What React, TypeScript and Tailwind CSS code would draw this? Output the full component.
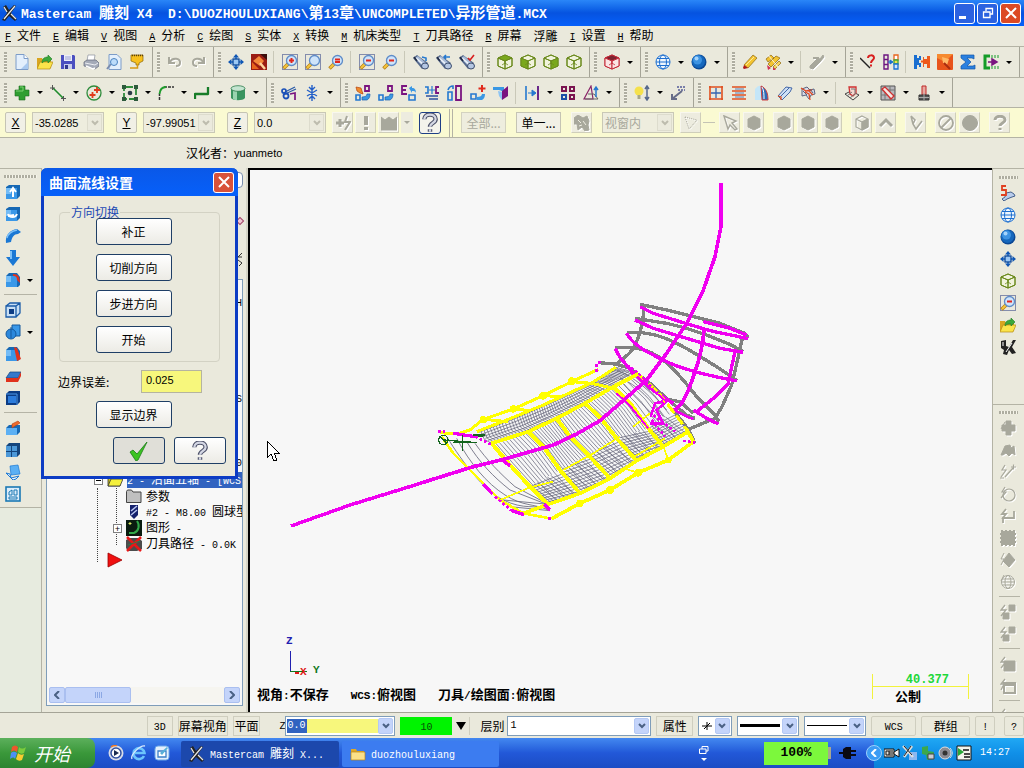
import type { ReactNode } from "react"

const G = "#a8a89c"

function Svg({ children, dim = false }: { children: ReactNode; dim?: boolean }) {
  return (
    <svg
      viewBox="0 0 16 16"
      className={dim ? "w-4 h-4 shrink-0 drop-shadow-[1px_1px_0_#ffffff]" : "w-4 h-4 shrink-0"}
      fill="none"
      stroke={dim ? G : "none"}
      aria-hidden="true"
    >
      {children}
    </svg>
  )
}

const latin = {
  sm: "font-['Liberation_Mono',monospace] text-[10px] whitespace-pre",
  md: "font-['Liberation_Mono',monospace] text-[11px] whitespace-pre",
  lg: "font-['Liberation_Mono',monospace] text-[13px] whitespace-pre",
}

/* Latin letters are half as wide as the Chinese ones, so they get their own size */
function Mix({ text, size = "sm" }: { text: string; size?: "sm" | "md" | "lg" }) {
  return (
    <>
      {text.split(/([\u0020-\u007f]+)/).map((part, i) =>
        i % 2 === 1 ? (
          <span key={i} className={latin[size]}>
            {part}
          </span>
        ) : (
          part
        )
      )}
    </>
  )
}

function Cube({ top = "none", left = "none", right = "none", line = "#6b8a1c" }) {
  return (
    <Svg>
      <g stroke={line} strokeLinejoin="round">
        <path d="M8 1 15 4v8l-7 3-7-3V4z" fill="#f1f3dc" />
        <path d="M8 1 15 4 8 7 1 4z" fill={top} />
        <path d="M1 4l7 3v8l-7-3z" fill={left} />
        <path d="M15 4 8 7v8l7-3z" fill={right} />
        <path d="M8 7V10M5 11l3-2 3 2" strokeWidth=".8" />
      </g>
    </Svg>
  )
}

function Zoom({ box = false, mark = "" }: { box?: boolean; mark?: string }) {
  return (
    <Svg>
      {box && <rect x=".5" y=".5" width="15" height="15" stroke="#1c2f7c" strokeDasharray="1 1" />}
      <path d="M6 10 1.500 14.500" stroke="#b8801a" strokeWidth="3.500" />
      <path d="M6 10 2 14" stroke="#f5c63c" strokeWidth="2" />
      <circle cx="9.500" cy="6.500" r="5" fill="#cfe4fa" stroke="#5f8cc8" strokeWidth="1.300" />
      {mark && <path d={mark} stroke="#e0261c" strokeWidth="2" />}
    </Svg>
  )
}

function Spyglass({ mark, color }: { mark: string; color: string }) {
  return (
    <Svg>
      <path d="M0 4 4 1l11 8-6 6z" fill="#54688c" />
      <path d="M2 4l3-2 8 7-3 4z" fill="#a9bcd8" />
      <path d="M3 4l8 7" stroke="#eef3fa" strokeWidth="1.600" />
      <ellipse cx="12" cy="12" rx="3.500" ry="3" fill="#b4c6e2" stroke="#3b4c6c" />
      <path d="M1 3l3 4" stroke="#222c44" strokeWidth="1.500" />
      <path d={mark} stroke={color} strokeWidth="1.600" />
    </Svg>
  )
}

const Globe = (
  <Svg>
    <g stroke="#1d6fd0">
      <circle cx="8" cy="8" r="7" fill="#eef6fd" />
      <ellipse cx="8" cy="8" rx="3.500" ry="7" />
      <path d="M1 8h14M2 4.500h12M2 11.500h12" />
    </g>
  </Svg>
)

const Sphere = (
  <Svg>
    <circle cx="8" cy="8" r="7.500" fill="#0c4894" />
    <circle cx="7.500" cy="7.300" r="6.600" fill="#1668bd" />
    <circle cx="6.500" cy="6" r="4.500" fill="#3d93e2" />
    <circle cx="5.500" cy="4.500" r="2" fill="#a5d4fb" />
  </Svg>
)

const Pan = (
  <Svg>
    <path d="M8 0l3 3.500H5zM8 16l3-3.500H5zM0 8l3.500-3v6zM16 8l-3.500-3v6z" fill="#0f56b4" />
    <path d="M8 3v10M3 8h10" stroke="#1464c4" strokeWidth="1.500" />
    <rect x="5" y="5" width="6" height="6" fill="#9cc8f4" stroke="#0c479a" strokeWidth="1.300" />
  </Svg>
)

const OpenFolder = (
  <Svg>
    <path d="M0 14V4h5l1 2h8v8z" fill="#d9a520" />
    <path d="M0 15 3 8h13l-3 7z" fill="#fbe44b" stroke="#b58a14" strokeWidth=".7" />
    <path d="M5 9c0-4 2-6 6-6V1l4 4-4 4V7C8 7 7 7 5 9z" fill="#3ca83a" stroke="#1d7c26" strokeWidth=".6" />
  </Svg>
)

const NewFile = (
  <Svg>
    <path d="M2 .5h8l4 4v11H2z" fill="#e3effc" stroke="#7c9cc8" />
    <path d="M10 .5v4h4" fill="#fff" stroke="#7c9cc8" />
    <path d="M7 15h7V8z" fill="#a9c9ef" />
  </Svg>
)
const Save = (
  <Svg>
    <path d="M1 1h13l1 1v13H1z" fill="#4b4fc0" />
    <path d="M4 1h8v6H4z" fill="#eceef9" />
    <path d="M4 10h8v5H4z" fill="#c9cdec" />
    <path d="M5 11h3v4H5z" fill="#33388f" />
    <path d="M5 3h6M5 5h6" stroke="#9aa0d4" />
  </Svg>
)
const Printer = (
  <Svg>
    <path d="M5 1h7l-1 6H4z" fill="#fff" stroke="#8a8f9c" strokeWidth=".7" />
    <path d="M1 8l3-2h9l3 3v3l-4 3-11-3z" fill="#a4aab8" stroke="#62687a" strokeWidth=".7" />
    <path d="M2 9l10 2 3-2" stroke="#eceef2" />
    <path d="M3 12l7 3 2-1" stroke="#fff" strokeWidth="1.500" />
  </Svg>
)
const Preview = (
  <Svg>
    <path d="M3 .5h8l4 4v11H3z" fill="#e3effc" stroke="#7c9cc8" />
    <path d="M5 10l-4 5" stroke="#7a8cae" strokeWidth="2" />
    <circle cx="8" cy="8" r="3.500" fill="#bcdcfa" stroke="#4c83c0" />
  </Svg>
)
const Funnel = (
  <Svg>
    <path d="M2 1h12v6l-4 2v2H7V9L2 7z" fill="#f7c01d" stroke="#8d6606" strokeWidth=".7" />
    <path d="M3 1.500h11" stroke="#5b4008" strokeWidth="1.500" strokeDasharray="1 1" />
    <path d="M8.500 11v3H1" stroke="#d79a12" strokeWidth="1.500" />
  </Svg>
)
const Undo = (
  <Svg dim>
    <path d="M2 3v6h6M3 8c2-5 11-4 10 1 0 2-2 3-4 3" strokeWidth="2" />
  </Svg>
)
const Redo = (
  <Svg dim>
    <path d="M14 3v6H8M13 8C11 3 2 4 3 9c0 2 2 3 4 3" strokeWidth="2" />
  </Svg>
)
const Repaint = (
  <Svg>
    <rect width="16" height="16" fill="#9b1c12" />
    <path d="M1 15V8l7 7z" fill="#e8641c" />
    <path d="M2 7l6-5 5 5-4 5z" fill="#f4883a" />
    <path d="M9 9l5 6" stroke="#ffd39a" strokeWidth="2.500" />
    <path d="M9 0h7v6z" fill="#3c0e0c" />
  </Svg>
)
const Pencil = (
  <Svg>
    <path d="M2 11 11 1l4 3-9 10z" fill="#f4c430" stroke="#8e6710" strokeWidth=".7" />
    <path d="M2 11l4 3-4 1-1-1z" fill="#b01818" />
    <path d="M4 11l8-8" stroke="#fdeb9a" />
  </Svg>
)
const Pencils = (
  <Svg>
    <path d="M1 5l5-4 3 3-6 4zM3 10l8-8 4 2-9 9z" fill="#f4c430" stroke="#8e6710" strokeWidth=".7" />
    <path d="M8 13l6-6 2 2-6 6z" fill="#f6d45c" stroke="#8e6710" strokeWidth=".7" />
    <path d="M2 11l4 3-3 2zM8 13l3 3H8z" fill="#d03050" />
    <path d="M3 1l10 12" stroke="#fff" strokeWidth=".8" />
  </Svg>
)
const DimErase = (
  <Svg dim>
    <path d="M1 12 9 4l2 1 3-4 1 2-4 5-7 7-3-1z" fill={G} />
    <path d="M4 4h5v4" strokeWidth="2" />
  </Svg>
)
const WhatLine = (
  <Svg>
    <path d="M0 4l10 10" stroke="#222" strokeWidth="1.500" />
    <path d="M8 4c0-3 6-4 6 0 0 2-3 2-3 5" stroke="#d81e1e" strokeWidth="2" />
    <path d="M10 10.500h2v2h-2z" fill="#d81e1e" />
  </Svg>
)
const Ladder = (
  <Svg>
    <path d="M1 1h4v14H1zM1 5.500h4M1 10.500h4" stroke="#6c1480" strokeWidth="1.400" />
    <path d="M11 1h4v5h-4z" fill="#fff" stroke="#e8641c" strokeWidth="1.300" />
    <path d="M11 6h4v4h-4z" fill="#f6e04c" stroke="#3ca83a" strokeWidth="1.300" />
    <path d="M11 10h4v5h-4z" fill="#cfe4fa" stroke="#1a6fd0" strokeWidth="1.300" />
    <path d="M5 8h4M7 6l3 2-3 2z" fill="#1a6fd0" stroke="#1a6fd0" />
  </Svg>
)
const Gauge = (
  <Svg>
    <path d="M0 1h3v3h2V2h2v4H5v3h2v4H5v-2H3v4H0z" fill="#1a6fd0" />
    <path d="M10 5h3V2h3v12h-3v-4h-3v3H9V3h1z" fill="#ee5a1c" />
    <path d="M7 7.500h3" stroke="#ee5a1c" strokeWidth="2" />
  </Svg>
)
const Shade = (
  <Svg>
    <rect width="16" height="16" rx="1" fill="#e8541c" />
    <path d="M0 4 8 8l8-8H0z" fill="#f68a30" />
    <path d="M5 3l7 2-2 6-4-2z" fill="#ffb868" />
    <path d="M7 9l6 6" stroke="#a82c10" strokeWidth="2" />
  </Svg>
)
const Sigma = (
  <Svg>
    <path d="M1 1h13v4l-2-1H7l4 4-4 4h6l2-1v4H1v-3l5-4-5-4z" fill="#2a80e0" stroke="#1256a8" strokeWidth=".7" />
  </Svg>
)
const Bracket = (
  <Svg>
    <path d="M7 2H2v12h5" stroke="#149c28" strokeWidth="3" />
    <path d="M5 8h6M9 5l5 3-5 3z" stroke="#7a1480" strokeWidth="1.500" fill="#7a1480" />
    <path d="M9 1v3M12 1v3M15 1v3M9 12v3M12 12v3M15 12v3" stroke="#149c28" />
  </Svg>
)
const Plus = (
  <Svg>
    <path d="M5 1h6v4h4v6h-4v4H5v-4H1V5h4z" fill="#2f9e30" stroke="#1b6d20" strokeWidth=".6" />
    <path d="M6 2h3v4H2" stroke="#7cd070" />
  </Svg>
)
const LineIcon = (
  <Svg>
    <path d="M3 3l10 10" stroke="#1f8c2c" strokeWidth="1.600" />
    <path d="M0 3h5M2.500 0v5M11 13.500h5M13.500 11v5" stroke="#555" />
  </Svg>
)
const CircleIcon = (
  <Svg>
    <circle cx="8" cy="8" r="7" stroke="#2f8c3c" strokeWidth="1.300" />
    <path d="M6.500 7v6M3.500 10h6M11 2v6M8 5h6" stroke="#e03a1c" strokeWidth="1.800" />
  </Svg>
)
const RectIcon = (
  <Svg>
    <path d="M2 2h12v12H2z" stroke="#2f8c3c" strokeWidth="1.800" strokeDasharray="9 2" />
    <path d="M0 0h4v4H0zM12 0h4v4h-4zM0 12h4v4H0zM12 12h4v4h-4z" fill="#2d5a3c" />
    <circle cx="8" cy="8" r="2.300" fill="#2d3c48" />
  </Svg>
)
const FilletIcon = (
  <Svg>
    <path d="M1.500 15V9M6 2h10" stroke="#333" strokeWidth="1.500" strokeDasharray="3 1" />
    <path d="M1.500 9C2 4 4 2 8 2" stroke="#1f9c2c" strokeWidth="2" />
  </Svg>
)
const SplineIcon = (
  <Svg>
    <path d="M1 14V9h13V2" stroke="#177c28" strokeWidth="2.300" strokeLinejoin="round" />
  </Svg>
)
const CylIcon = (
  <Svg>
    <path d="M1 3v10c2 3 12 3 14 0V3z" fill="#3a9460" />
    <path d="M3 5v9c1 1 3 1 4 1V6z" fill="#9ad4b0" />
    <ellipse cx="8" cy="3.500" rx="7" ry="2.800" fill="#c4e4d0" stroke="#2c7c4c" strokeWidth=".8" />
  </Svg>
)
const Scissors = (
  <Svg>
    <path d="M4 7l10-5M4 9l11-5" stroke="#2c5ca8" strokeWidth="1.300" />
    <circle cx="3" cy="6" r="2" stroke="#1a50b8" strokeWidth="1.700" />
    <circle cx="5" cy="11" r="2.500" stroke="#1a50b8" strokeWidth="1.800" />
    <path d="M9 9l5-1v7" stroke="#7a1480" strokeWidth="1.700" />
  </Svg>
)
const Star = (
  <Svg>
    <path d="M8 0v16M3 5l10 6M13 5 3 11M5 2l3 3 3-3M5 14l3-3 3 3" stroke="#2460c8" strokeWidth="1.400" />
  </Svg>
)

/* blue source shape and purple target shape used by all the transform tools */
function Xform({ d, extra }: { d: string; extra?: ReactNode }) {
  return (
    <Svg>
      <path d="M1 10h4v5H1z" stroke="#2478d0" strokeWidth="1.600" />
      <path d={d} stroke="#7a1480" strokeWidth="1.800" />
      <path d="M7 15h5c2-1 3-3 3-6h-3c0 2-2 3-5 3z" fill="#3a98e4" stroke="#1a60b0" strokeWidth=".7" />
      {extra}
    </Svg>
  )
}
const X1 = <Xform d="M10 1h4v5h-4z" extra={<path d="M1 2l5 1 2 6-3-1-3-2z" fill="#f08c2c" stroke="#b8440c" strokeWidth=".7" />} />
const X2 = <Xform d="M10 1h4v5h-4z" />
const X3 = (
  <Svg>
    <path d="M6 1H1v8h5M1 5h4" stroke="#7a1480" strokeWidth="1.800" />
    <path d="M8 10h6v5H8z" stroke="#2478d0" strokeWidth="1.600" />
    <path d="M8 3l3-2v2c3 0 4 2 4 5-1-2-2-2-4-2v2z" fill="#3a98e4" />
  </Svg>
)
const X4 = (
  <Svg>
    <path d="M1 2h3v6H1" stroke="#2478d0" strokeWidth="1.600" />
    <path d="M15 2h-3v6h3" stroke="#7a1480" strokeWidth="1.800" />
    <path d="M8 1v8M5 5h6" stroke="#2478d0" strokeWidth="1.200" />
    <path d="M2 11h12M5 14h9" stroke="#2c50a0" strokeWidth="1.600" />
  </Svg>
)
const X5 = (
  <Svg>
    <path d="M1 7h4v8H1z" stroke="#2478d0" strokeWidth="1.600" />
    <path d="M9 1h5v14H9z" stroke="#7a1480" strokeWidth="1.800" />
    <path d="M1 5c1-3 3-4 5-4v3" stroke="#2478d0" strokeWidth="1.600" />
  </Svg>
)
const X6 = (
  <Svg>
    <path d="M1 9h5v5H1z" stroke="#2478d0" strokeWidth="1.600" />
    <path d="M7 15h5c2-1 3-3 3-6h-3c0 2-2 3-5 3z" fill="#3a98e4" />
    <path d="M12 0v7M8.500 3.500h7" stroke="#e02a1c" strokeWidth="2" />
  </Svg>
)
const X7 = (
  <Svg>
    <path d="M0 2h11v6C8 4 4 5 0 5z" fill="#3a98e4" />
    <path d="M5 6l4 1v8l-3-4z" fill="#8cc4f4" />
    <path d="M9 6l6-5v10l-6 4z" fill="#7a1480" />
  </Svg>
)
const OffsetIcon = (
  <Svg>
    <path d="M2 1v14" stroke="#2478d0" strokeWidth="1.600" />
    <path d="M14 1v14" stroke="#5c1480" strokeWidth="1.800" />
    <path d="M4 8h7M8 5l4 3-4 3z" stroke="#2478d0" fill="#2478d0" />
  </Svg>
)
const Grid4 = (
  <Svg>
    <path d="M2 2h4v4H2zM10 2h4v4h-4zM10 10h4v4h-4z" stroke="#7a1450" strokeWidth="2" />
    <path d="M2 10h4v4H2z" stroke="#1a50a8" strokeWidth="2" />
  </Svg>
)
const Tri = (
  <Svg>
    <path d="M8 1 1 14h9z" stroke="#8a2468" strokeWidth="1.200" />
    <path d="M5 9h6l4 5H2" stroke="#666" />
    <path d="M13 3v9M11 5l2-3 2 3" stroke="#2478d0" strokeWidth="1.500" />
  </Svg>
)
const Bulb = (
  <Svg>
    <circle cx="5" cy="6" r="4.500" fill="#f5e14c" />
    <path d="M3.500 10h3v4h-3z" fill="#a8a888" />
    <path d="M13 2v12M11 4l2-3 2 3M11 12l2 3 2-3" stroke="#56688c" strokeWidth="1.500" />
  </Svg>
)
const DimArrow = (
  <Svg>
    <path d="M7 2h9M8 5h7" stroke="#555c98" strokeWidth="1.300" strokeDasharray="2 1" />
    <path d="M2 14 12 6M2 9v5h5" stroke="#666c88" strokeWidth="2" />
  </Svg>
)
const GridRed = (
  <Svg>
    <path d="M1 2h14M1 14h14M2 1v14M14 1v14" stroke="#e05020" strokeWidth="1.600" />
    <path d="M3 8h10M8 3v10" stroke="#3464b0" strokeWidth="1.300" />
  </Svg>
)
const Rows = (
  <Svg>
    <path d="M1 2h14M1 6h14M1 10h14M1 14h14" stroke="#e05020" strokeWidth="1.500" />
    <path d="M4 4h9M4 12h9M4 8h9" stroke="#3464b0" strokeWidth=".8" />
  </Svg>
)
const Sail = (
  <Svg>
    <path d="M1 15V4c2-3 5-4 6-3v14z" fill="#c4e6f8" />
    <path d="M7 1c5 2 7 7 7 14H8z" fill="#2c6cb8" stroke="#d04040" />
    <path d="M8 2c2 3 2 8 2 12" stroke="#fff" />
  </Svg>
)
const Sweep = (
  <Svg>
    <path d="M1 11 9 2l6 1-2 4-8 8-2-2z" fill="#cfe0f4" stroke="#4468a8" />
    <path d="M3 12l9-9" stroke="#4468a8" />
    <path d="M1 11l3 1v3" stroke="#e05020" strokeWidth="1.300" />
  </Svg>
)
const Fan = (
  <Svg>
    <path d="M2 4l5-2 3 3 4-1 1 5-4 1-2 4-3-4-4 1z" fill="#d8dce8" stroke="#5c6480" />
    <path d="M1 3l5 3 6-1M5 7l4 2 1 6M8 5l5 5" stroke="#e04820" strokeWidth="1.300" />
    <path d="M3 6l4 4M10 4l3 4" stroke="#5c6480" />
  </Svg>
)
const CamBox = (
  <Svg>
    <path d="M1 9l6-3 8 4-6 5z" stroke="#444" />
    <path d="M5 2h7v6l-3 3-3-2z" fill="#f3d8d0" stroke="#d03030" strokeWidth="1.300" />
    <path d="M3 11l5-4M6 13l6-5M7 4h4v4" stroke="#777" />
  </Svg>
)
const CamSweep = (
  <Svg>
    <path d="M1 1h14v14H1z" fill="#b8b8bc" stroke="#555" />
    <path d="M1 5h14M5 1v14M1 10h14M10 1v14" stroke="#777" />
    <path d="M2 4l3-2 9 9-3 3z" fill="#f4e8e4" stroke="#d03030" strokeWidth="1.300" />
  </Svg>
)
const CamPost = (
  <Svg>
    <path d="M6 1h4v9H6z" fill="#e8a8a0" stroke="#c02828" />
    <path d="M3 10h10v5H3z" fill="#555" stroke="#333" />
    <path d="M3 12.500h10M8 8v7" stroke="#aaa" />
  </Svg>
)

/* greyed out tools */
const DBolt = (
  <Svg dim>
    <path d="M1 8h8M5 4v8" strokeWidth="3" />
    <path d="M12 1l-2 6h5l-5 8" strokeWidth="2" />
  </Svg>
)
const DBang = (
  <Svg dim>
    <path d="M8 1v9M8 12v3" strokeWidth="4" />
  </Svg>
)
const DCrown = (
  <Svg dim>
    <path d="M0 2l4 3 4-3 4 3 4-3v13H0z" fill={G} />
  </Svg>
)
const DCamo = (
  <Svg dim>
    <path d="M0 3l4-3 5 3 4-2 2 5-1 4 1 5-4 1-3-4-4 3-1-6-3 0z" fill={G} />
    <path d="M4 5l3 3M9 6l3 4M5 11l3-1" stroke="#efeee2" />
  </Svg>
)
const DDash = (
  <Svg dim>
    <path d="M2 2l12 3-8 9z" strokeDasharray="1 1" />
  </Svg>
)
const DCursor = (
  <Svg dim>
    <path d="M2 1l12 5-4 2 5 6-2 1-5-5-2 4z" strokeWidth="1.400" />
  </Svg>
)
const DHex = (
  <Svg dim>
    <path d="M8 1l6 3v8l-6 3-6-3V4z" fill={G} />
  </Svg>
)
const DCube = (
  <Svg dim>
    <path d="M8 1l6 3v8l-6 3-6-3V4zM8 7v8M2 4l6 3 6-3" strokeWidth="1.200" />
    <path d="M8 7l6-3v8l-6 3z" fill={G} />
  </Svg>
)
const DUp = (
  <Svg dim>
    <path d="M2 11l6-6 6 6" strokeWidth="3" />
  </Svg>
)
const DV = (
  <Svg dim>
    <path d="M3 1l2 8 3 5 6-8M3 1l4 4-2 4" strokeWidth="1.600" />
  </Svg>
)
const DNo = (
  <Svg dim>
    <circle cx="8" cy="8" r="7" strokeWidth="1.800" />
    <path d="M3 13 13 3" strokeWidth="1.800" />
  </Svg>
)
const DDisc = (
  <Svg dim>
    <circle cx="8" cy="8" r="7.500" fill={G} />
  </Svg>
)
const DHelp = (
  <Svg dim>
    <path d="M3 5c0-5 10-5 10 0 0 3-5 3-5 6M8 13v2" strokeWidth="3" />
  </Svg>
)
const DPlus = (
  <Svg dim>
    <path d="M6 1h5v4h4v6h-4v4H6v-4H2V5h4z" fill={G} />
    <path d="M1 9 5 2" />
  </Svg>
)
const DTruck = (
  <Svg dim>
    <path d="M1 13 5 4l5-1 1 3 3-2 1 9-3-2-3 3-3-3-3 2z" fill={G} />
  </Svg>
)
const DLine = (
  <Svg dim>
    <path d="M5 1 2 6h4L1 13M5 13l8-9M11 3h5M13.500 .5v5M0 14h4" strokeWidth="1.200" />
  </Svg>
)
const DCirc = (
  <Svg dim>
    <circle cx="9" cy="9" r="6" strokeWidth="1.200" />
    <path d="M5 1 2 6h4L1 12" strokeWidth="1.200" />
  </Svg>
)
const DHook = (
  <Svg dim>
    <path d="M6 1 2 6h4L2 11M3 15v-5h11V3" strokeWidth="1.800" />
  </Svg>
)
const DSquare = (
  <Svg dim>
    <path d="M1 1h14v14H1z" fill={G} strokeDasharray="2 2" strokeWidth="2" />
  </Svg>
)
const DGem = (
  <Svg dim>
    <path d="M9 1l6 7-6 7-6-6z" fill={G} />
    <path d="M4 1 1 7h3l-3 6" />
  </Svg>
)
const DGlobe = (
  <Svg dim>
    <circle cx="8" cy="8" r="6.500" />
    <ellipse cx="8" cy="8" rx="3" ry="6.500" />
    <path d="M1 8h14M2 5h12M2 11h12M4 1 1 7" />
  </Svg>
)
const DBlocks = (
  <Svg dim>
    <path d="M9 1h6v6H9zM3 9h6v6H3z" fill={G} />
    <path d="M5 1 1 6h5L1 12" strokeWidth="1.300" />
  </Svg>
)
const DBox = (
  <Svg dim>
    <path d="M4 5h11v10H4z" fill={G} />
    <path d="M5 1 1 6h5L1 12" strokeWidth="1.300" />
  </Svg>
)
const DWin = (
  <Svg dim>
    <path d="M4 5h11v10H4zM4 7h11" strokeWidth="2" />
    <path d="M5 1 1 6h3L1 12" strokeWidth="1.300" />
  </Svg>
)

/* solids: blue blocks with one marked feature */
function Solid({ children, round = false }: { children?: ReactNode; round?: boolean }) {
  return (
    <Svg>
      <path d={round ? "M1 4l3-3h8l3 4v8l-2 2H1z" : "M1 3l3-2h11v11l-3 3H1z"} fill="#1668b4" />
      <path d="M1 4h11v11H1z" fill="#3a98e8" />
      <path d="M1 4h5v6H1z" fill="#74bcf6" />
      {children}
    </Svg>
  )
}
const SExtrude = <Solid><path d="M8 13V6M5 8l3-4 3 4" stroke="#fff" strokeWidth="2" /></Solid>
const SRevolve = <Solid><path d="M3 8c1 4 8 4 9 0M3 10l6-1" stroke="#fff" strokeWidth="1.800" /></Solid>
const SSweep = (
  <Svg>
    <path d="M1 15C0 7 5 2 12 1l4 3-3 2C9 6 7 9 6 14z" fill="#1b78d4" />
    <path d="M2 10c1-4 5-7 10-8" stroke="#7cc0f8" strokeWidth="1.500" />
  </Svg>
)
const SLoft = (
  <Svg>
    <path d="M5 0h6v7h4l-7 9-7-9h4z" fill="#1b78d4" />
    <path d="M6 1v8" stroke="#7cc0f8" strokeWidth="2" />
  </Svg>
)
const SFillet = <Solid round><path d="M8 2c5 0 7 3 7 9l-3-3c0-3-1-4-4-4z" fill="#e0321c" /></Solid>
const SShell = (
  <Svg>
    <path d="M1 4h10v11H1zM1 4l4-3h10v10l-4 4M11 4l4-3" stroke="#1b5ca8" strokeWidth="1.300" fill="#c8dff4" />
    <path d="M4 7h5v5H4z" fill="#0c3c84" />
  </Svg>
)
const SBool = (
  <Svg>
    <path d="M7 1h8v11H7z" fill="#3a98e8" stroke="#14589c" />
    <circle cx="6" cy="10" r="5" fill="#2c88dc" stroke="#14589c" />
    <path d="M6 3v11" stroke="#14589c" />
  </Svg>
)
const SCham = <Solid round><path d="M9 1l3 1 4 11-4 2z" fill="#e0321c" /></Solid>
const STrim = (
  <Svg>
    <path d="M1 10 5 4h11l-3 6z" fill="#3478cc" stroke="#14447c" strokeWidth=".7" />
    <path d="M1 10h12v4H1zM13 10l3-6v4l-3 6z" fill="#e0321c" />
  </Svg>
)
const SBlock = (
  <Svg>
    <path d="M1 4l3-3h11v11l-3 3H1z" fill="#0c3c84" />
    <path d="M3 6h8v7H3z" fill="#2c7cdc" />
    <path d="M1 4h11v11" stroke="#4c98e8" />
  </Svg>
)
const SEdit = (
  <Svg>
    <path d="M1 8l3-3h11v7l-3 3H1z" fill="#1668b4" />
    <path d="M1 8h11v7H1z" fill="#5cb0f4" />
    <path d="M7 4l6-3 2 2-5 3-3 2z" fill="#ee6a2c" stroke="#b03c10" strokeWidth=".6" />
  </Svg>
)
const SQuad = (
  <Svg>
    <path d="M1 4l3-3h11v11l-3 3H1z" fill="#14447c" />
    <path d="M1 4h5v5H1zM7 4h5v5H7zM1 10h5v5H1zM7 10h5v5H7z" fill="#4c98d8" />
  </Svg>
)
const SFold = (
  <Svg>
    <path d="M5 2l8-1 2 9-9 1z" fill="#5cb0f4" stroke="#1b78d4" strokeWidth=".7" />
    <path d="M1 9l4 1 1 4 8-2-3 3-3 1z" fill="#eef6fd" stroke="#1b78d4" />
  </Svg>
)
const SView = (
  <Svg>
    <rect x="1" y="1" width="14" height="14" fill="#dcecfa" stroke="#1b78b4" strokeWidth="1.600" />
    <path d="M4 9V6l3-2v5zM9 4h3v5H9zM4 11h8v2H4z" stroke="#1b78b4" />
  </Svg>
)
const Bone = (
  <Svg>
    <path d="M6 8l5-1 3 2 1 2-3 1-5 2-3 2-2-2 3-2z" fill="#b8ccec" stroke="#44608c" />
    <path d="M6 1H2v4h4v5H1" stroke="#e04020" strokeWidth="1.800" />
  </Svg>
)
const Mcam = (
  <Svg>
    <path d="M1 2l5-1v6l3 1 4-7h3l-4 7 4 6-4 1-3-4-2 5-4-1 1-4-3-2z" fill="#222" />
    <path d="M3 3v4M6 13l6-9" stroke="#fff" />
  </Svg>
)
const Logo = (
  <Svg>
    <path d="M1 2l3-2 3 5 5-5 2 1-5 7 6 6-2 2-6-5-4 5-3-1 5-7z" fill="#222" />
    <path d="M2 2l3 5M13 1 2 14M9 9l5 5" stroke="#e6e6e6" strokeWidth="1.300" />
  </Svg>
)

function HelpIcon() {
  return (
    <svg viewBox="0 0 16 16" className="w-5 h-5" fill="none" aria-hidden="true">
      <path d="M3.500 5c0-5 9-5 9 0 0 3-4.500 3-4.500 6M8 13v2" stroke="#4c5068" strokeWidth="3.600" />
      <path d="M3.500 5c0-5 9-5 9 0 0 3-4.500 3-4.500 6M8 13v2" stroke="#d4d7e4" strokeWidth="1.800" />
    </svg>
  )
}

type Tool = [ReactNode, string] | "sep" | "dd"

const bar1: Tool[][] = [
  [[NewFile, "新建"], [OpenFolder, "打开"], [Save, "保存"], [Printer, "打印"], [Preview, "预览"], [Funnel, "过滤"]],
  [[Undo, "撤销"], [Redo, "重做"]],
  [
    [Pan, "平移"], [Repaint, "重画"], "sep",
    [<Zoom box mark="M9.500 4v5M7 6.500h5" />, "窗口放大"], [<Zoom box />, "目标放大"], [<Zoom mark="M7 5.500h5M7 8h5" />, "缩放"], "sep",
    [<Zoom box mark="M7 6.500h5" />, "缩小一半"], [<Zoom mark="M7 6.500h5" />, "缩小"], "sep",
    [<Spyglass mark="M9 3l4 1v3" color="#2478d0" />, "动态旋转"],
    [<Spyglass mark="M14 3H8M10 1 8 3l2 2" color="#2478d0" />, "前一视图"],
    [<Spyglass mark="M9 4l2 2 4-5" color="#d82020" />, "指定视图"],
  ],
  [
    [<Cube top="#7aa81c" />, "俯视图"], [<Cube left="#7aa81c" />, "前视图"],
    [<Cube right="#7aa81c" />, "右视图"], [<Cube />, "等角视图"],
  ],
  [[<Cube line="#c42838" top="#7c2430" left="#fbe4e4" right="#fbe4e4" />, "构图面"], "dd"],
  [[Globe, "线框"], "dd", [Sphere, "着色"], "dd"],
  [[Pencil, "删除"], [Pencils, "删除重复"], "dd", "sep", [DimErase, "恢复"], "dd"],
  [[WhatLine, "分析图素"], [Ladder, "分析动态"], "sep", [Gauge, "统计"], [Shade, "着色设置"], [Sigma, "求和"], [Bracket, "运行"], "dd"],
]

const bar2: Tool[][] = [
  [[Plus, "绘点"], "dd", [LineIcon, "直线"], "dd", [CircleIcon, "圆"], "dd", [RectIcon, "矩形"], "dd", [FilletIcon, "倒圆角"], "dd", [SplineIcon, "曲线"], "dd", [CylIcon, "圆柱"], "dd"],
  [[Scissors, "修剪"], [Star, "打断"], "dd"],
  [[X1, "动态平移"], [X2, "平移"], [X3, "旋转"], [X4, "镜像"], [X5, "比例"], [X6, "移动到原点"], [X7, "投影"], "sep", [OffsetIcon, "偏置"], "dd", [Grid4, "阵列"], [Tri, "尺寸标注"], "dd"],
  [[Bulb, "显示"], "dd", [DimArrow, "标注"]],
  [[GridRed, "网状曲面"], [Rows, "直纹曲面"], [Sail, "旋转曲面"], [Sweep, "扫描曲面"], [Fan, "曲面修剪"], "dd", "sep", [CamBox, "粗加工"], "dd", [CamSweep, "精加工"], "dd", [CamPost, "多轴"], "dd"],
]

const leftTools: Tool[] = [
  [SExtrude, "挤出"], [SRevolve, "旋转实体"], [SSweep, "扫描实体"], [SLoft, "举升"], [SFillet, "实体倒圆角"], "sep",
  [SShell, "抽壳"], [SBool, "布尔运算"], [SCham, "实体倒角"], [STrim, "修剪实体"], [SBlock, "加厚"], "sep",
  [SEdit, "编辑实体"], [SQuad, "查找特征"], [SFold, "移除面"], [SView, "三视图"],
]
const rightTop: Tool[] = [
  [Bone, "最近命令"], [Globe, "线框显示"], [Sphere, "着色显示"], [Pan, "适度化"], [<Cube />, "等角"],
  [<Zoom box mark="M7 6.500h5" />, "缩小视图"], [OpenFolder, "打开文件"], [Mcam, "关于"],
]
const rightLow: Tool[] = [
  [DPlus, "点"], [DTruck, "边"], [DLine, "线"], [DCirc, "圆弧"], [DHook, "串连"], [DSquare, "面"], [DGem, "实体面"], [DGlobe, "曲面"], "sep",
  [DBlocks, "群组一"], [DBlocks, "群组二"], "sep",
  [DBox, "层"], [DWin, "窗口"], "sep", [DBox, "全部"],
]

function Toolbar({ groups }: { groups: Tool[][] }) {
  return (
    <>
      {groups.map((group, g) => (
        <div key={g} className="flex items-center pl-1 pr-1 border-r border-[#a5a497]">
          <div className="w-[3px] h-5 mr-[3px] bg-[repeating-linear-gradient(#aeada0_0_2px,#f5f4ea_2px_3px)]" />
          {group.map((tool, i) =>
            tool === "sep" ? (
              <div key={i} className="w-px h-[22px] mx-[3px] mr-1 bg-[#c9c8b8]" />
            ) : tool === "dd" ? (
              <button key={i} aria-label="更多" className="w-[13px] h-5 flex items-center justify-center">
                <span className="border-x-[3px] border-x-transparent border-t-[3px] border-t-black" />
              </button>
            ) : (
              <button key={i} aria-label={tool[1]} className="w-[23px] h-[23px] flex items-center justify-center">
                {tool[0]}
              </button>
            )
          )}
        </div>
      ))}
    </>
  )
}

function SideTools({ tools, drop = [] }: { tools: Tool[]; drop?: number[] }) {
  return (
    <>
      {tools.map((tool, i) =>
        typeof tool === "string" ? (
          <div key={i} className="h-px my-[3px] mb-1 mx-1 shrink-0 bg-[#b5b4a6]" />
        ) : (
          <button key={i} aria-label={tool[1]} className="h-[22px] shrink-0 pl-[5px] flex items-center gap-1.5">
            {tool[0]}
            {drop.includes(i) && <span className="border-x-[3px] border-x-transparent border-t-[3px] border-t-black" />}
          </button>
        )
      )}
    </>
  )
}

function Chevron({ dim = false }: { dim?: boolean }) {
  return (
    <span
      className={
        dim
          ? "w-[15px] my-px mr-px flex items-center justify-center border border-[#dddccd] bg-[#ebeadd] text-[#bdbcae]"
          : "w-[15px] my-px mr-px flex items-center justify-center rounded-xs border border-[#b4c8f4] bg-[#c4d4fa] text-[#4a6184]"
      }
    >
      <svg viewBox="0 0 8 6" className="w-2 h-1.5" fill="none" stroke="currentColor" strokeWidth="2" aria-hidden="true">
        <path d="M1 1l3 3 3-3" />
      </svg>
    </span>
  )
}

function Coord({ axis, value }: { axis: string; value: string }) {
  return (
    <div className="flex items-center gap-1.5">
      <button className="w-[21px] h-[21px] border border-[#c5c4b4] rounded-xs bg-[#f1f0e6] underline font-['Liberation_Sans',sans-serif]">
        {axis}
      </button>
      <div className="flex w-[72px] h-[21px] border border-[#c9c8b6] bg-[#eeedde]">
        <input
          aria-label={axis + " 坐标"}
          defaultValue={value}
          className="w-0 flex-1 pl-0.5 bg-transparent text-[11px] font-['Liberation_Sans',sans-serif]"
        />
        <Chevron dim />
      </div>
    </div>
  )
}

function DimBtn({ icon, label }: { icon: ReactNode; label: string }) {
  return (
    <button disabled aria-label={label} className="w-[21px] h-[21px] shrink-0 flex items-center justify-center bg-[#edecdf] border border-[#f8f7ee] border-b-[#cfceba] border-r-[#cfceba]">
      {icon}
    </button>
  )
}

function XpButton({ children }: { children: ReactNode }) {
  return (
    <button className="w-[76px] h-[27px] shrink-0 rounded-[3px] border border-[#1f3f66] bg-linear-to-b from-white to-[#ecebe5] text-xs leading-4">
      {children}
    </button>
  )
}

const menus = [
  "F 文件", "E 编辑", "V 视图", "A 分析", "C 绘图", "S 实体", "X 转换",
  "M 机床类型", "T 刀具路径", "R 屏幕", "浮雕", "I 设置", "H 帮助",
]

/* parts of the operations list that stick out beside the dialog */
const behind = ["", "H", "", "", "", "", "", "S", "", "", "", "0"]

type Pt = [number, number]

// yellow cross sections of the pipe, from the near end to the far end
const sections: Pt[][] = [
  [[215, 820], [270, 885], [330, 950], [385, 1003]],
  [[325, 785], [370, 830], [420, 900], [480, 970]],
  [[410, 745], [450, 800], [505, 855], [570, 925]],
  [[495, 700], [540, 742], [590, 805], [650, 872]],
  [[580, 650], [635, 705], [685, 775], [730, 830]],
  [[655, 612], [715, 668], [760, 725], [805, 785]],
]
const ridge: Pt[] = [[170, 785], [280, 742], [370, 705], [450, 668], [520, 636], [588, 592]]

const toPath = (pts: Pt[]) => "M" + pts.map((p) => p.join(" ")).join("L")
const lerp = (a: Pt, b: Pt, t: number): Pt => [
  Math.round(a[0] + (b[0] - a[0]) * t),
  Math.round(a[1] + (b[1] - a[1]) * t),
]

function meshLines() {
  const out: string[] = []
  for (let s = 0; s < sections.length - 1; s++) {
    const a = sections[s]
    const b = sections[s + 1]
    const n = s < 4 ? 11 : 6
    for (let k = 1; k < n; k++) {
      const t = k / n
      const line = a.map((p, i) => lerp(p, b[i], t))
      out.push(toPath(line.slice(0, k % 3 === 0 ? 4 : 3)))
    }
    // top strip, slanted both ways
    for (let k = 0; k < 12; k++) {
      const t = k / 12
      const low = lerp(a[0], b[0], t)
      const high = lerp(ridge[s], ridge[s + 1], Math.min(1, t + 0.1))
      out.push(toPath([low, [low[0] - 22, low[1] - 12], high]))
      if (k % 2) out.push(toPath([lerp(a[0], ridge[s], t), lerp(b[0], ridge[s + 1], t)]))
    }
    // bottom strip
    for (let k = 0; k < 9; k++) {
      const t = k / 9
      out.push(toPath([lerp(a[2], a[3], t), lerp(b[2], b[3], Math.min(1, t + 0.15))]))
      out.push(toPath([lerp(a[3], b[3], t), lerp(a[2], b[2], Math.max(0, t - 0.2))]))
    }
  }
  return out.join("")
}

function Wireframe() {
  return (
    <svg viewBox="250 170 742 542" className="absolute left-0 top-0 w-[742px] h-[542px]" fill="none" shapeRendering="crispEdges" aria-label="异形管道">
      <g transform="translate(420 170) scale(.33333)" strokeLinejoin="round">
        <path d={meshLines()} stroke="#66667a" strokeWidth="2.200" />
        <g stroke="#66667a" strokeWidth="2.500">
          <path d="M80 800C130 880 190 960 250 990S350 1005 385 1015" />
          <path d="M110 805C150 880 200 940 255 975S340 1000 385 1020" />
          <path d="M140 815C180 880 220 920 270 960L385 1005" />
          <path d="M165 820C200 870 240 910 285 950L385 1003" />
          <path d="M250 990L385 1003M270 1010L390 1022" />
          <path d="M590 600C640 620 690 660 740 720M600 625C650 640 700 700 730 740M610 640C640 680 690 720 720 760" />
        </g>

        <g stroke="#808080" strokeWidth="10">
          <path d="M660 403L740 420 800 435 900 460 975 490 985 502" />
          <path d="M645 445L740 460 800 475 860 495 930 523 970 545" />
          <path d="M620 487C680 485 720 495 770 520S900 595 950 632" />
          <path d="M585 532C650 530 690 540 725 567S790 628 830 680L885 735 897 755" />
          <path d="M672 408C670 470 650 530 625 553L585 585" />
          <path d="M968 500L955 560 935 645 905 712 885 745 805 778" />
          <path d="M535 578L585 582 630 595 690 640 745 690 800 735 825 745" />
          <path d="M740 688L780 695 820 730M760 720L805 778 825 820" />
        </g>

        <g stroke="#f000f0" strokeWidth="10">
          <path d="M660 410L700 430 790 458 870 482 985 506M850 455L930 475 980 495" />
          <path d="M645 450L700 475 800 505 900 535 970 547" />
          <path d="M620 490C640 530 700 555 740 575S840 612 950 633" />
          <path d="M585 535L600 562 640 610 700 662 760 700" />
          <path d="M852 475C850 540 825 610 805 660S770 715 760 722" strokeWidth="11" />
          <path d="M945 545L935 590 925 640 880 685 830 725M820 720L860 745 895 762" />
          <path d="M765 722L820 748M690 760L730 760 710 720 745 690 705 700 692 740" strokeWidth="8" />
        </g>

        <g stroke="#ff0" strokeWidth="9">
          {sections.slice(0, 5).map((pts, i) => (
            <path key={i} d={toPath(pts)} strokeWidth="12" />
          ))}
          <path d={toPath(sections[5])} strokeDasharray="34 8" />
          <path d={toPath(sections.map((s) => s[0]))} strokeWidth="11" />
          <path d={toPath(sections.map((s) => s[3]))} strokeWidth="11" />
          <path d={toPath(ridge)} />
          <path d="M60 788L110 792 150 780 190 748 280 717 370 677 455 635 535 598M190 748L265 755M280 717L330 722M370 677L430 680M455 635L515 640 580 655" />
          <path d="M65 800L100 850 190 940 240 990 310 1030 395 1046" strokeWidth="8" />
          <path d="M310 1030L385 1003 M395 1046L480 1000 570 960 655 908 745 870 820 815 800 778" strokeWidth="11" />
          <path d="M240 990L330 952 400 935M430 900L520 850 600 800M640 770L690 730M730 830L745 870" strokeWidth="5" />
          <path d="M640 862L735 805M610 895L655 908" strokeWidth="5" />
        </g>
        <g fill="#ff0">
          <circle cx="190" cy="749" r="11" />
          <circle cx="280" cy="717" r="11" />
          <circle cx="370" cy="677" r="12" />
          <circle cx="455" cy="634" r="12" />
          <circle cx="480" cy="1000" r="11" />
          <circle cx="570" cy="960" r="12" />
          <circle cx="655" cy="908" r="12" />
          <circle cx="745" cy="870" r="10" />
        </g>

        <path
          d="M0 940L160 890 250 868 330 845 400 825 470 792 540 752 600 700 680 630 740 550 800 460 850 360 885 260 903 170 903 38"
          stroke="#f000f0"
          strokeWidth="11"
        />
        <g stroke="#f000f0" strokeWidth="8">
          <path d="M100 790L165 800M190 942L217 972M275 1022L312 1034M245 868L270 888M372 1003L390 1020" strokeWidth="10" />
          <path d="M165 800L215 825M225 980L275 1022M530 605L530 580 545 575M620 585L650 605 700 655M695 750L735 800M700 735L765 785M790 812L825 818M55 785L75 785M385 1046L400 1046" strokeDasharray="8 7" />
          <path d="M590 670L630 708 685 775M650 620L740 695" strokeWidth="6" />
        </g>
        <g stroke="#12641c" strokeWidth="4">
          <circle cx="70" cy="810" r="14" />
          <path d="M70 810L170 818M127 795v48M100 818h50M60 800l20 20M160 795h35M175 800h15" />
        </g>
      </g>

      <path d="M291 526 350 505 420 483.500" stroke="#f000f0" strokeWidth="3.500" />

      <path d="M267 441v17l4-4 3 7 3-1-3-7h5z" fill="#fff" stroke="#000" />

      <path d="M290.500 651v20" stroke="#2020b0" />
      <path d="M290 671.500h17" stroke="#107820" />
      <path d="M295 672.500h4" stroke="#e01818" strokeWidth="2" />
      <path d="M872.500 674v25M968.500 674v25M872 686.500h97" stroke="#f2f23c" />
    </svg>
  )
}

export default function App() {
  return (
    <div className="w-full h-screen flex flex-col overflow-hidden bg-[#eae9dc] text-black text-xs leading-4 font-['Noto_Sans_CJK_SC',sans-serif]">
      <header className="h-[26px] shrink-0 flex items-center justify-between pl-0.5 pr-[3px] bg-linear-to-b from-[#2a86f8] via-[#0653e0] to-[#0660fa] text-white">
        <div className="flex items-center gap-[3px]">
          {Logo}
          <h1 className="text-[15px] leading-5 font-bold whitespace-nowrap">
            <Mix size="lg" text="Mastercam 雕刻 X4  D:\DUOZHOULUXIANG\第13章\UNCOMPLETED\异形管道.MCX" />
          </h1>
        </div>
        <div className="flex gap-0.5">
          <button aria-label="最小化" className="w-[21px] h-[21px] rounded-[3px] border border-white bg-[#2b62e0] flex items-end p-1">
            <span className="w-[7px] h-[3px] bg-white" />
          </button>
          <button aria-label="还原" className="w-[21px] h-[21px] rounded-[3px] border border-white bg-[#2b62e0] flex items-center justify-center">
            <svg viewBox="0 0 12 12" className="w-3 h-3" fill="none" stroke="#fff" strokeWidth="1.300">
              <path d="M4 4V1.500h6.500V7H8M1.500 5H8v5.500H1.500z" />
            </svg>
          </button>
          <button aria-label="关闭" className="w-[21px] h-[21px] rounded-[3px] border border-white bg-[#dc4a24] flex items-center justify-center">
            <svg viewBox="0 0 12 12" className="w-3 h-3" stroke="#fff" strokeWidth="2">
              <path d="M1 1l10 10M11 1 1 11" />
            </svg>
          </button>
        </div>
      </header>

      <nav className="h-5 shrink-0 flex items-center gap-3 pl-[5px]">
        {menus.map((m) => (
          <button key={m} className="whitespace-nowrap">
            {m.includes(" ") ? (
              <>
                <span className="font-['Liberation_Mono',monospace] text-[10px] underline">{m[0]}</span>
                <span className="font-['Liberation_Mono',monospace] text-[10px] whitespace-pre"> </span>
                {m.slice(2)}
              </>
            ) : (
              m
            )}
          </button>
        ))}
      </nav>

      <div className="h-[31px] shrink-0 flex border-t border-[#b4b3a5]">
        <Toolbar groups={bar1} />
      </div>
      <div className="h-[30px] shrink-0 flex border-t border-[#b4b3a5]">
        <Toolbar groups={bar2} />
      </div>

      <div className="h-[31px] shrink-0 flex items-center pl-[5px] bg-[#fafad2] border-y border-[#b4b3a5]">
        <div className="flex gap-3">
          <Coord axis="X" value="-35.0285" />
          <Coord axis="Y" value="-97.99051" />
          <Coord axis="Z" value="0.0" />
        </div>
        <div className="ml-1.5 flex items-center gap-0.5">
          <DimBtn icon={DBolt} label="快速点" />
          <DimBtn icon={DBang} label="自动抓点" />
          <DimBtn icon={DCrown} label="抓点设置" />
          <button disabled aria-label="抓点方式" className="w-3 h-[21px] flex items-center justify-center bg-[#edecdf]">
            <span className="border-x-[3px] border-x-transparent border-t-[3px] border-t-[#a8a89c]" />
          </button>
          <button aria-label="帮助" className="ml-1 w-[22px] h-[22px] flex items-center justify-center rounded-[3px] border border-[#1f3f86] bg-[#f4f3ec]">
            <HelpIcon />
          </button>
        </div>
        <div className="mx-2 w-1 h-7 border-x border-[#b4b3a5]" />
        <div className="flex items-center gap-2.5">
          <button disabled className="w-[45px] h-[21px] border border-[#d3d2c0] bg-[#eeedde] text-[#a8a89c]">全部...</button>
          <button className="w-[45px] h-[21px] border border-[#c5c4b4] bg-[#f1f0e6]">单一...</button>
          <DimBtn icon={DCamo} label="实体选择" />
          <div className="flex w-[72px] h-[21px] border border-[#c9c8b6] bg-[#eeedde] text-[#a8a89c]">
            <select disabled aria-label="选择方式" className="w-0 flex-1 pl-0.5 appearance-none">
              <option>视窗内</option>
            </select>
            <Chevron dim />
          </div>
        </div>
        <div className="ml-1.5 flex items-center">
          <div className="flex gap-0.5">
            <DimBtn icon={DDash} label="多边形" />
            <span className="w-3 self-center h-px bg-[#c4c3b4]" />
          </div>
          <div className="ml-1 flex gap-[3px]">
            <DimBtn icon={DCursor} label="标准选择" />
            <DimBtn icon={DHex} label="实体" />
          </div>
          <div className="ml-[9px] flex gap-[3px]">
            <DimBtn icon={DHex} label="边界" />
            <DimBtn icon={DHex} label="面" />
            <DimBtn icon={DHex} label="主体" />
          </div>
          <div className="ml-[9px] flex gap-[3px]">
            <DimBtn icon={DCube} label="背面" />
            <DimBtn icon={DUp} label="上一个" />
          </div>
          <div className="ml-[9px] flex gap-[9px]">
            <DimBtn icon={DV} label="验证" />
            <div className="flex gap-[3px]">
              <DimBtn icon={DNo} label="取消选择" />
              <DimBtn icon={DDisc} label="结束选择" />
            </div>
            <DimBtn icon={DHelp} label="选择帮助" />
          </div>
        </div>
      </div>

      <div className="h-[30px] shrink-0 flex items-center pl-[186px]">
        汉化者：<span className="text-[11px] font-['Liberation_Sans',sans-serif]">yuanmeto</span>
      </div>

      <main className="relative flex-1 min-h-0 flex">
        <aside className="w-[42px] shrink-0 flex flex-col bg-[#e7ebdf] border-r border-[#b4b3a5]">
          <div className="flex flex-col pb-0.5 bg-[#eae9dc] border-y border-[#b4b3a5]">
            <div className="h-[3px] mt-1.5 mb-[3px] mx-1 bg-[repeating-linear-gradient(90deg,#aeada0_0_2px,#f5f4ea_2px_3px)]" />
            <SideTools tools={leftTools} drop={[4, 7]} />
          </div>
        </aside>

        <section className="w-[206px] shrink-0 flex flex-col pl-1 pr-[3px] pb-1.5 border-r-2 border-[#d5d4c6]">
          <div className="h-[111px] shrink-0 flex flex-col items-end justify-between pt-1 pb-3">
            <span className="w-[9px] h-4 rounded-r-sm border border-[#7a8fae] bg-white" />
            <span className="w-1.5 h-1.5 rotate-45 border border-[#a04868] bg-[#f0c8d4]" />
            <svg viewBox="0 0 6 14" className="w-1.5 h-3.5" fill="none" stroke="#333" aria-hidden="true">
              <path d="M5 0 1 4h4M1 7l4 3-3 3" />
            </svg>
          </div>
          <div className="flex-1 min-h-0 flex flex-col border border-[#7f9db9] bg-[#f8f8f8]">
            <div className="flex-1 min-h-0 overflow-hidden">
              {behind.map((t, i) => (
                <div key={i} className="h-4 flex items-center justify-end">
                  <Mix text={t} />
                </div>
              ))}
              <div className="h-4 pl-[47px] flex items-center gap-1 whitespace-nowrap overflow-hidden">
                <span className="w-[9px] h-[9px] shrink-0 border border-[#808080] bg-white flex items-center justify-center">
                  <span className="w-[5px] h-px bg-black" />
                </span>
                <svg viewBox="0 0 16 14" className="w-4 h-3.5 shrink-0" stroke="#333" strokeWidth=".8">
                  <path d="M1 13V3h5l1 2h6v8z" fill="#c8c020" />
                  <path d="M1 13 4 6h12l-3 7z" fill="#f4f03c" />
                </svg>
                <span className="bg-[#3163c0] text-white flex-1">
                  <Mix text="2 - 沿面五轴 - [WCS" />
                </span>
              </div>
              <div className="ml-[50px] flex border-l border-dotted border-[#444] h-[74px]">
                <div className="ml-[18px] border-l border-dotted border-[#444] h-[57px]" />
                <ul className="-ml-1 h-16 w-0 flex-1 whitespace-nowrap">
                  <li className="h-4 flex items-center gap-1 pl-[13px]">
                    <svg viewBox="0 0 16 14" className="w-4 h-3.5 shrink-0" fill="#c0c0c0" stroke="#444">
                      <path d="M.5 13.500V2.500l1-1.500h4l1.500 2h8v10.500z" />
                    </svg>
                    参数
                  </li>
                  <li className="h-4 flex items-center gap-1 pl-[13px]">
                    <svg viewBox="0 0 16 16" className="w-4 h-4 shrink-0">
                      <path d="M4 1h8v10l-4 4-4-4z" fill="#14206c" />
                      <path d="M5 7l6-5M5 11l6-5" stroke="#b8c4f0" strokeWidth="1.500" />
                    </svg>
                    <span><Mix text="#2 - M8.00 圆球型" /></span>
                  </li>
                  <li className="h-4 flex items-center gap-1">
                    <span className="w-[9px] h-[9px] shrink-0 border border-[#808080] bg-white flex items-center justify-center text-[9px] leading-none">+</span>
                    <svg viewBox="0 0 16 16" className="w-4 h-4 shrink-0">
                      <rect width="16" height="16" fill="#0a1c10" />
                      <path d="M4 2v3M2.500 3.500h3" stroke="#d8e860" />
                      <path d="M11 1c3 4 2 10-3 12H3" stroke="#30a848" strokeWidth="2" fill="none" />
                    </svg>
                    <span><Mix text="图形 -" /></span>
                  </li>
                  <li className="h-4 flex items-center gap-1 pl-[13px]">
                    <svg viewBox="0 0 16 16" className="w-4 h-4 shrink-0">
                      <path d="M0 4l4-2h8l4 3v8l-5 2H2l-2-3z" fill="#4c4c4c" />
                      <path d="M1 1l14 14M15 1 1 15" stroke="#e81818" strokeWidth="2.500" />
                      <path d="M2 9l12-4" stroke="#2c7c48" />
                    </svg>
                    <span><Mix text="刀具路径 - 0.0K" /></span>
                  </li>
                </ul>
              </div>
              <div className="ml-[60px] -mt-2.5 w-4 h-4">
                <svg viewBox="0 0 16 16" className="w-4 h-4">
                  <path d="M1 1l14 7-14 7z" fill="#f01010" stroke="#900" strokeWidth=".8" />
                </svg>
              </div>
            </div>
            <div className="h-4 mx-0.5 mb-0.5 shrink-0 flex bg-[#f6f5f0]">
              <button aria-label="向左滚动" className="w-4 rounded-xs border border-[#aabff0] bg-[#c4d4fa] flex items-center justify-center">
                <svg viewBox="0 0 6 8" className="w-1.5 h-2" fill="none" stroke="#4a6184" strokeWidth="2"><path d="M5 0 1 4l4 4" /></svg>
              </button>
              <div className="w-[66px] rounded-xs border border-[#aabff0] bg-[#c4d4fa] flex items-center justify-center gap-px">
                {[0, 1, 2, 3].map((n) => (
                  <span key={n} className="w-px h-1.5 bg-[#8ca8e4]" />
                ))}
              </div>
              <div className="flex-1" />
              <button aria-label="向右滚动" className="w-4 rounded-xs border border-[#aabff0] bg-[#c4d4fa] flex items-center justify-center">
                <svg viewBox="0 0 6 8" className="w-1.5 h-2" fill="none" stroke="#4a6184" strokeWidth="2"><path d="M1 0l4 4-4 4" /></svg>
              </button>
            </div>
          </div>
        </section>

        <section className="relative flex-1 min-w-0 overflow-hidden bg-[#f7f7f7] border-t-2 border-l-2 border-black font-bold">
          <Wireframe />
          <span className="absolute left-[36px] bottom-[65px] text-[11px] leading-3 font-['Liberation_Mono',monospace] text-[#2020b0]">Z</span>
          <span className="absolute left-[50px] bottom-[34px] text-[11px] leading-3 font-['Liberation_Mono',monospace] text-[#e01818]">X</span>
          <span className="absolute left-[63px] bottom-[36px] text-[11px] leading-3 font-['Liberation_Mono',monospace] text-[#107820]">Y</span>
          <p className="absolute left-[7px] bottom-2 flex gap-[22px] whitespace-nowrap text-[13px]">
            <span><Mix size="md" text="视角:不保存" /></span>
            <span><Mix size="md" text="WCS:俯视图" /></span>
            <span><Mix size="md" text="刀具/绘图面:俯视图" /></span>
          </p>
          <div className="absolute right-[43px] bottom-2 w-[42px] flex flex-col items-end">
            <span className="font-['Liberation_Mono',monospace] text-[12px] leading-4 text-[#20d838]">40.377</span>
            <span className="self-start -ml-3 text-[13px]">公制</span>
          </div>
        </section>

        <aside className="w-8 shrink-0 overflow-hidden flex flex-col border-l border-[#b4b3a5]">
          <div className="h-[237px] shrink-0 flex flex-col pl-0.5 border-y border-[#b4b3a5]">
            <div className="h-[3px] mt-[7px] mb-[3px] ml-1 mr-1.5 shrink-0 bg-[repeating-linear-gradient(90deg,#aeada0_0_2px,#f5f4ea_2px_3px)]" />
            <SideTools tools={rightTop} />
          </div>
          <div className="flex-1 min-h-0 overflow-hidden flex flex-col pl-0.5">
            <div className="h-[3px] mt-1.5 mb-[3px] ml-1 mr-1.5 shrink-0 bg-[repeating-linear-gradient(90deg,#aeada0_0_2px,#f5f4ea_2px_3px)]" />
            <SideTools tools={rightLow} />
          </div>
        </aside>

        <div role="dialog" aria-label="曲面流线设置" className="absolute left-[41px] top-0 w-[197px] rounded-t-md border-[3px] border-t-0 border-[#0c3cc4] bg-[#eae9dc]">
          <div className="-mx-[3px] h-7 flex items-center justify-between pl-2 pr-1 rounded-t-md bg-linear-to-b from-[#0a58e8] to-[#0660fa] text-white">
            <h2 className="text-sm leading-5 font-bold">曲面流线设置</h2>
            <button aria-label="关闭对话框" className="w-[21px] h-[21px] rounded-[3px] border border-white bg-[#d8523a] flex items-center justify-center">
              <svg viewBox="0 0 12 12" className="w-3 h-3" stroke="#fff" strokeWidth="2">
                <path d="M1 1l10 10M11 1 1 11" />
              </svg>
            </button>
          </div>
          <fieldset className="mt-2 mx-[15px] h-[158px] border border-[#d3d2c4] rounded-sm">
            <legend className="ml-2.5 px-px text-[#1a48b4]">方向切换</legend>
            <div className="-mt-0.5 pr-3 flex flex-col items-center gap-[9px]">
              <XpButton>补正</XpButton>
              <XpButton>切削方向</XpButton>
              <XpButton>步进方向</XpButton>
              <XpButton>开始</XpButton>
            </div>
          </fieldset>
          <div className="mt-2 pl-3.5 flex items-center">
            <label htmlFor="tol" className="w-[83px]">边界误差:</label>
            <input id="tol" defaultValue="0.025" className="w-[61px] h-[23px] pl-1 pb-1 border border-[#b5b4a0] bg-[#f7f77c] font-['Liberation_Sans',sans-serif] text-[11px]" />
          </div>
          <div className="mt-2 flex justify-center pr-3">
            <XpButton>显示边界</XpButton>
          </div>
          <div className="mt-[9px] mb-3 pr-[9px] flex justify-end gap-[9px]">
            <button aria-label="确定" className="w-[52px] h-[27px] rounded-[3px] border border-[#1f3f66] bg-[#e0dfd8] flex items-center justify-center">
              <svg viewBox="0 0 20 20" className="w-5 h-5">
                <path d="M1 11l3-2 4 4L18 1l-9 18-2 1z" fill="#3cc422" stroke="#1c7c18" strokeWidth=".8" />
              </svg>
            </button>
            <button aria-label="说明" className="w-[52px] h-[27px] rounded-[3px] border border-[#1f3f66] bg-linear-to-b from-white to-[#ecebe5] flex items-center justify-center">
              <HelpIcon />
            </button>
          </div>
        </div>
      </main>

      <div className="h-[26px] shrink-0 flex items-center gap-[5px] pl-[147px] border-t border-[#a5a497] whitespace-nowrap">
        <button className="w-[26px] h-5 border border-[#cfcebf]"><Mix text="3D" /></button>
        <button className="w-[50px] h-5 border border-[#cfcebf]">屏幕视角</button>
        <button className="w-[28px] h-5 border border-[#cfcebf]">平面</button>
        <div className="ml-1.5 flex items-center">
          <label htmlFor="zdepth" className="w-3.5 text-right"><Mix text="Z" /></label>
          <div className="flex w-[110px] h-5 border border-[#7f9db9] bg-white">
            <div className="w-0 flex-1 my-0.5 ml-px flex bg-[#f7f77c]">
              <input id="zdepth" defaultValue="0.0" className="w-5 bg-[#3163c0] text-white text-[10px] font-['Liberation_Mono',monospace]" />
            </div>
            <Chevron />
          </div>
        </div>
        <div className="flex items-center h-5">
          <button aria-label="颜色" className="w-[52px] h-[18px] bg-[#00f400] text-[#074f07]"><Mix text="10" /></button>
          <button aria-label="颜色列表" className="w-[18px] h-[18px] flex items-center justify-center border-r border-[#cfcebf]">
            <span className="border-x-[5px] border-x-transparent border-t-[8px] border-t-black" />
          </button>
        </div>
        <div className="ml-[5px] flex items-center gap-[3px]">
          <label htmlFor="level">层别</label>
          <div className="flex w-[144px] h-5 border border-[#7f9db9] bg-white">
            <select id="level" className="w-0 flex-1 pl-0.5 appearance-none text-[10px] font-['Liberation_Mono',monospace]">
              <option>1</option>
            </select>
            <Chevron />
          </div>
        </div>
        <button className="w-[37px] h-5 border border-[#cfcebf]">属性</button>
        <div className="flex w-[34px] h-5 border border-[#7f9db9] bg-white">
          <button aria-label="点型" className="flex-1 flex items-center justify-center">
            <svg viewBox="0 0 10 10" className="w-2.5 h-2.5" stroke="#000"><path d="M0 5h10M5 1v8M2 8l6-6" /></svg>
          </button>
          <Chevron />
        </div>
        <div className="flex w-[63px] h-5 border border-[#7f9db9] bg-white">
          <button aria-label="线宽" className="flex-1 flex items-center px-0.5"><span className="w-full h-[3px] bg-black" /></button>
          <Chevron />
        </div>
        <div className="flex w-[63px] h-5 border border-[#7f9db9] bg-white">
          <button aria-label="线型" className="flex-1 flex items-center px-0.5"><span className="w-full h-px bg-black" /></button>
          <Chevron />
        </div>
        <button className="w-[45px] h-5 rounded-xs border border-[#cfcebf]"><Mix text="WCS" /></button>
        <button className="w-[50px] h-5 rounded-xs border border-[#cfcebf]">群组</button>
        <button className="w-5 h-5 rounded-xs border border-[#cfcebf]"><Mix text="!" /></button>
        <button className="w-5 h-5 ml-1 rounded-xs border border-[#cfcebf]"><Mix text="?" /></button>
      </div>

      <footer className="h-[30px] shrink-0 flex items-stretch bg-linear-to-b from-[#4488f0] via-[#2258d8] to-[#1c4cc4] text-white whitespace-nowrap">
        <button className="w-[95px] shrink-0 flex items-center gap-1.5 pl-2.5 rounded-r-lg bg-linear-to-b from-[#5cb05c] via-[#3a983a] to-[#2c8430] text-lg leading-5 italic">
          <svg viewBox="0 0 18 18" className="w-[18px] h-[18px]">
            <path d="M2 3c2-2 4-2 6 0L7 8C5 6 3 6 1 8z" fill="#f0562c" />
            <path d="M9 3c2 2 4 2 7 0l-2 6c-2 1-4 1-6-1z" fill="#7ccc3c" />
            <path d="M1 9c2-2 4-1 6 0l-2 6c-1-2-3-2-5 0z" fill="#4c90f4" />
            <path d="M8 9c2 2 4 2 6 1l-2 6c-2 1-4 1-6-1z" fill="#f8cc30" />
          </svg>
          开始
        </button>
        <div className="ml-[13px] flex items-center gap-[7px]">
          <button aria-label="媒体播放器">
            <Svg>
              <circle cx="8" cy="8" r="7.500" fill="#d8dce8" />
              <circle cx="8" cy="8" r="5" fill="#fff" stroke="#3050a0" strokeWidth="1.500" />
              <path d="M6 5l5 3-5 3z" fill="#1c2c50" />
              <path d="M3 2a8 8 0 0 1 6-1.500" stroke="#f07c28" strokeWidth="1.500" />
            </Svg>
          </button>
          <button aria-label="浏览器">
            <Svg>
              <path d="M13 11a5.500 5.500 0 1 1 .5-3H4" stroke="#6cc4fc" strokeWidth="2.600" />
              <path d="M1 14C-1 10 9 0 14 1" stroke="#d8e8fc" strokeWidth="1.300" />
            </Svg>
          </button>
          <button aria-label="显示桌面">
            <Svg>
              <rect x="1" y="1" width="14" height="14" rx="3" fill="#e4f0fc" stroke="#6ca8e8" />
              <path d="M4 6h8v6H4z" fill="#fff" stroke="#3c80c8" strokeWidth="1.300" />
              <path d="M6 8l7-6 1 1-6 7z" fill="#58b0d8" />
            </Svg>
          </button>
        </div>
        <button className="ml-[11px] mt-[3px] mb-px w-[158px] shrink-0 flex items-center gap-[5px] pl-2 rounded-xs bg-[#1c48ac]">
          {Logo}
          <span><Mix text="Mastercam 雕刻 X..." /></span>
        </button>
        <button className="ml-[3px] mt-[3px] mb-px w-[157px] shrink-0 flex items-center gap-[5px] pl-2 rounded-xs bg-[#3c7cf0]">
          <Svg>
            <path d="M1 3h5l1 2h7v9H1z" fill="#e0a828" />
            <path d="M1 6h14v8H1z" fill="#fbe088" stroke="#b88418" strokeWidth=".7" />
          </Svg>
          <span><Mix text="duozhouluxiang" /></span>
        </button>
        <div className="ml-auto flex items-center">
          <button aria-label="语言栏" className="w-3 mr-[54px] flex flex-col items-center gap-1">
            <svg viewBox="0 0 10 8" className="w-2.5 h-2" fill="none" stroke="#fff"><path d="M3 3V.5h6V5H7M.5 3H7v4.500H.5z" /></svg>
            <span className="border-x-[3px] border-x-transparent border-t-[3px] border-t-white" />
          </button>
          <div className="w-16 h-[23px] flex items-center justify-center bg-[#7cf83c] text-black font-bold font-['Liberation_Mono',monospace] text-[13px]">100%</div>
          <div className="w-[3px] h-3 bg-[#a8a890]" />
          <svg viewBox="0 0 18 14" className="w-[18px] h-3.5 ml-2 mr-[17px]" aria-hidden="true">
            <path d="M0 6h4V3l3-2h5v3h5v2h-5v2h5v2h-5v3H7l-3-2V8H0z" fill="#0a0a14" />
          </svg>
        </div>
        <div className="w-[150px] shrink-0 flex items-center gap-0.5 bg-linear-to-b from-[#20a8f4] via-[#1090e8] to-[#0c80d8]">
          <button aria-label="隐藏图标" className="-ml-2 w-4 h-4 rounded-full bg-[#3c9cf4] border border-[#9cd0fc] flex items-center justify-center">
            <svg viewBox="0 0 6 8" className="w-1.5 h-2" fill="none" stroke="#fff" strokeWidth="2"><path d="M5 0 1 4l4 4" /></svg>
          </button>
          <Svg>
            <path d="M0 4h10v8H0z" fill="#e0e0dc" stroke="#111" />
            <path d="M10 7l5-3v8l-5-3z" fill="#f4f4f4" stroke="#111" />
            <path d="M2 6h3v4H2zM6 5v6M8 5v6" stroke="#111" />
          </Svg>
          <Svg>
            <path d="M7 7h8v8H7z" fill="#8cb8f0" />
            <path d="M1 1l10 11M10 1 2 12" stroke="#ddd" strokeWidth="2.500" />
            <path d="M2 1l8 9M9 1 2 11" stroke="#222" />
          </Svg>
          <Svg>
            <path d="M2 2l6-1v5l6 1-1 7-6 1-1-5-4-1z" fill="#3ca84c" />
            <path d="M8 9h6v5H8z" fill="#c8ccd4" stroke="#444" />
          </Svg>
          <Svg>
            <circle cx="7" cy="8" r="6" fill="#8c8c94" stroke="#ddd" />
            <circle cx="7" cy="8" r="2.500" fill="#333" />
            <path d="M12 3c3 3 3 7 0 10" stroke="#ddd" />
          </Svg>
          <Svg>
            <path d="M1 1h14v14H1z" fill="#f4f4ec" stroke="#111" />
            <path d="M2 3l6 4-6 4z" fill="#28a838" />
            <path d="M8 9h6M8 12h6M7 5h6" stroke="#111" strokeWidth="1.300" />
          </Svg>
          <time className="ml-1.5 font-['Liberation_Mono',monospace] text-[10px]">14:27</time>
        </div>
      </footer>
    </div>
  )
}
